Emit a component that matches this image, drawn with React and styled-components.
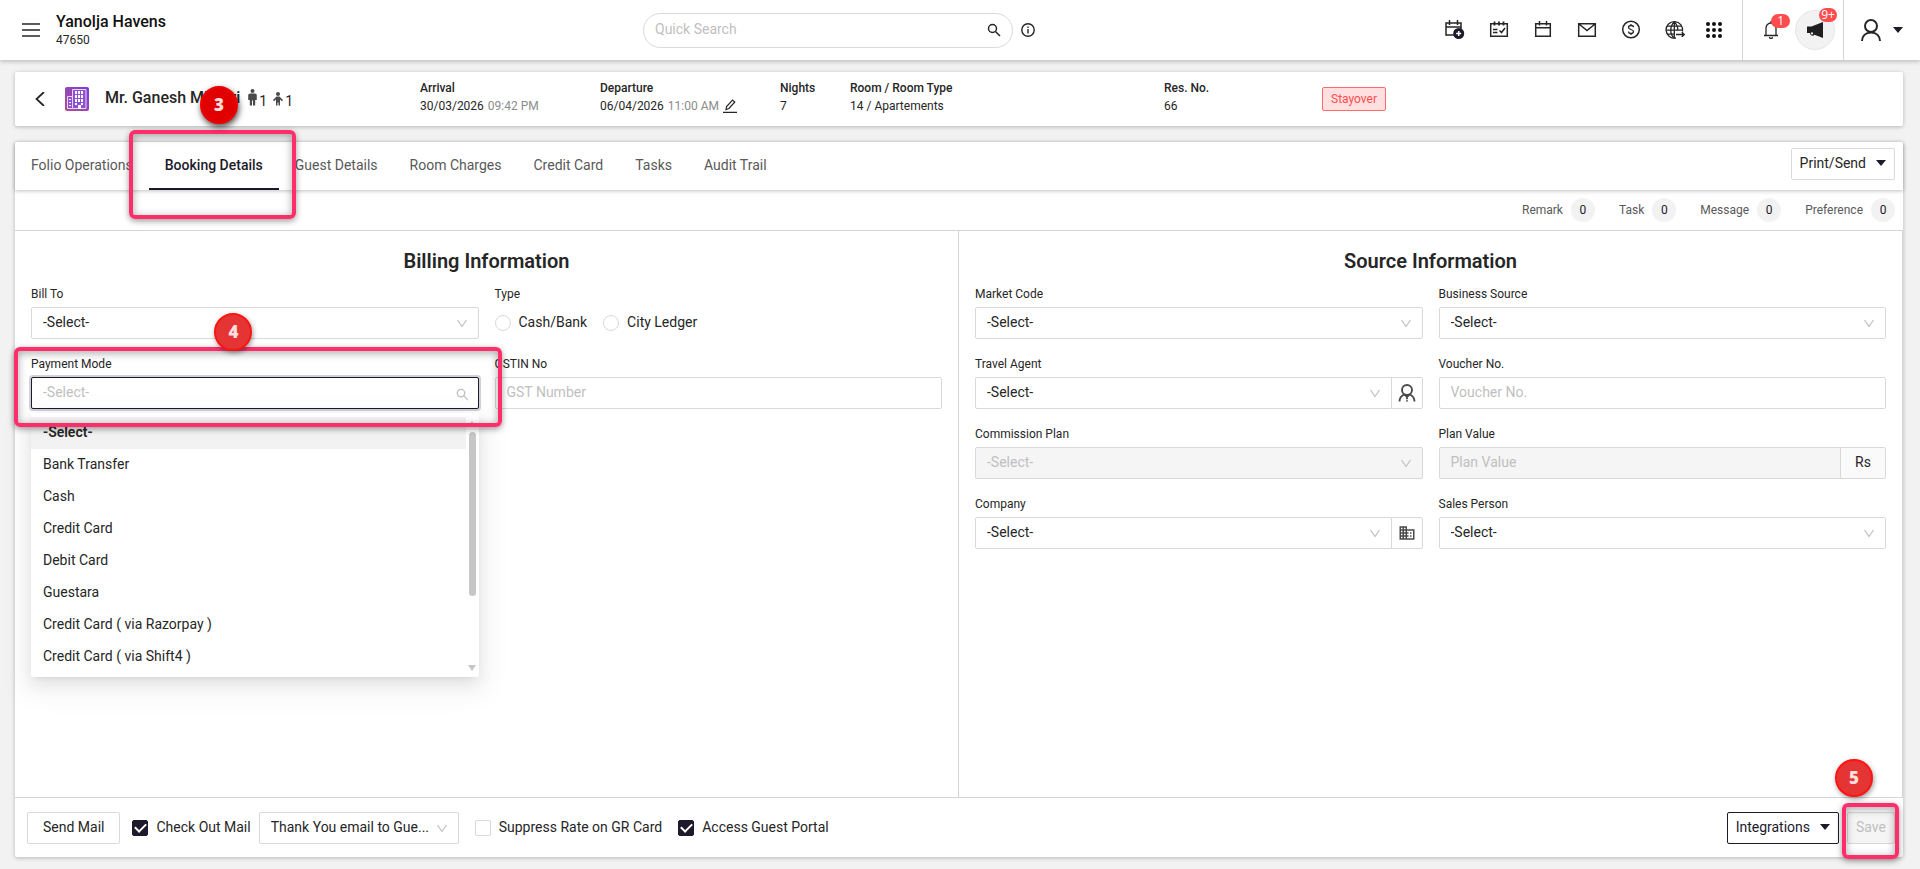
import styled, { createGlobalStyle, css } from 'styled-components';
import { MdBusiness } from 'react-icons/md';

const GlobalStyle = createGlobalStyle`
  * {
    box-sizing: border-box;
  }

  body {
    margin: 0;
    background: #f2f2f2;
    color: #262626;
    font-family: Roboto, "Liberation Sans", sans-serif;
    font-size: 14px;
    line-height: 20px;
  }

  button, input, select {
    font: inherit;
    color: inherit;
    margin: 0;
  }

  svg {
    display: block;
    flex: none;
  }
`;

const Page = styled.div`
  display: flex;
  flex-direction: column;
  min-height: 100vh;
`;

/* ---------- top header ---------- */

const Header = styled.header`
  display: flex;
  align-items: stretch;
  height: 60px;
  background: #fff;
  box-shadow: 0 2px 4px rgba(0, 0, 0, 0.2);
`;

const Brand = styled.div`
  display: flex;
  align-items: center;
  flex: 0 1 643px;
  padding-left: 22px;
  gap: 16px;

  & h1 {
    margin: 0;
    font-size: 16px;
    font-weight: 500;
    line-height: 20px;
    color: #111;
  }

  & p {
    margin: 0;
    font-size: 12px;
    line-height: 16px;
  }
`;

const IconButton = styled.button`
  position: relative;
  display: flex;
  align-items: center;
  justify-content: center;
  width: ${(props) => props.$width || 20}px;
  padding: 0;
  border: 0;
  background: none;
  cursor: pointer;
`;

const Search = styled.div`
  display: flex;
  align-items: center;
  gap: 8px;

  & .box {
    display: flex;
    align-items: center;
    width: 370px;
    height: 35px;
    padding: 0 11px;
    border: 1px solid #d9d9d9;
    border-radius: 18px;
  }

  & input {
    flex: 1;
    min-width: 0;
    padding: 0 0 2px;
    border: 0;
    outline: none;
    background: none;
  }

  & input::placeholder {
    color: #bfbfbf;
  }
`;

const Shortcuts = styled.nav`
  display: flex;
  margin-left: auto;
  padding-right: 11px;
`;

const HeaderGroup = styled.div`
  display: flex;
  align-items: center;
  gap: ${(props) => props.$gap}px;
  padding: ${(props) => props.$padding};
  border: 0;
  border-left: 1px solid #d4d5da;
  background: none;
`;

const Promo = styled.button`
  position: relative;
  display: flex;
  align-items: center;
  justify-content: center;
  width: 40px;
  height: 40px;
  padding: 0;
  border: 1px solid #e6e6e6;
  border-radius: 50%;
  background: #f2f2f2;
`;

const Badge = styled.span`
  position: absolute;
  top: ${(props) => props.$top}px;
  right: ${(props) => props.$right}px;
  min-width: 18px;
  height: 14px;
  padding: 0 ${(props) => props.$pad || 0}px;
  border-radius: 7px;
  background: #ff4d4f;
  color: #fff;
  font-family: "Open Sans", sans-serif;
  font-size: 12px;
  line-height: 13px;
  text-align: center;
`;

/* ---------- guest strip ---------- */

const Content = styled.main`
  display: flex;
  flex-direction: column;
  flex: 1;
  gap: 16px;
  padding: 12px 17px 12px 15px;
`;

const GuestBar = styled.section`
  display: grid;
  grid-template-columns: 405px 180px 180px 70px 314fr 158fr 581fr;
  align-items: center;
  height: 54px;
  border-radius: 2px;
  background: #fff;
  box-shadow: 0 1px 4px rgba(0, 0, 0, 0.25);
`;

const Guest = styled.div`
  position: relative;
  display: flex;
  align-items: center;
  padding-left: 20px;

  & .logo {
    margin: 0 16px 0 20px;
  }

  & h2 {
    margin: 0 8px 2px 0;
    font-size: 16px;
    font-weight: 500;
    line-height: 20px;
  }
`;

const Pax = styled.span`
  display: flex;
  align-items: flex-end;
  gap: 2px;
  height: 17px;
  margin: 0 6px 4px 0;
  line-height: 10px;
`;

const Fact = styled.dl`
  margin: 0 0 4px;
  font-size: 12px;
  line-height: 18px;

  & dt {
    font-weight: 500;
  }

  & dd {
    display: flex;
    align-items: center;
    gap: 4px;
    margin: 0;
  }

  & time {
    color: #8c8c8c;
  }
`;

const Status = styled.span`
  justify-self: start;
  padding: 0 8px;
  border: 1px solid #ff6b6d;
  border-radius: 2px;
  background: #ffdfdf;
  color: #ff4d4f;
  font-size: 12px;
  line-height: 22px;
`;

/* ---------- booking card ---------- */

const Card = styled.section`
  display: flex;
  flex-direction: column;
  flex: 1;
  border-radius: 2px;
  background: #fff;
  box-shadow: 0 1px 4px rgba(0, 0, 0, 0.25);
`;

const TabBar = styled.div`
  display: flex;
  align-items: stretch;
  height: 48px;
  padding-right: 8px;
  box-shadow: 0 1px 4px rgba(0, 0, 0, 0.25);
`;

const TabSlot = styled.div`
  position: relative;
  display: flex;
`;

const Tab = styled.button`
  padding: 0 16px;
  border: 0;
  border-bottom: 2px solid ${(props) => (props.$active ? '#1c1a2b' : 'transparent')};
  background: none;
  color: ${(props) => (props.$active ? '#1c1a2b' : '#595959')};
  font-weight: ${(props) => (props.$active ? 500 : 400)};
`;

const Button = styled.button`
  display: flex;
  align-items: center;
  gap: ${(props) => props.$gap || 0}px;
  height: 32px;
  padding: 0 ${(props) => props.$pad || 8}px 2px;
  border: 1px solid #d9d9d9;
  border-radius: 2px;
  background: #fff;
  white-space: nowrap;

  ${(props) =>
    props.$dark &&
    css`
      border-color: #1c1a2b;
      color: #1c1a2b;
    `}

  &:disabled {
    background: #f5f5f5;
    color: #bfbfbf;
  }
`;

const PrintSlot = styled.div`
  margin: 6px 0 0 auto;
`;

const Counters = styled.div`
  display: flex;
  align-items: center;
  justify-content: flex-end;
  gap: 24px;
  height: 41px;
  padding-right: 8px;
  border-bottom: 1px solid #d4d5da;
  color: #595959;
  font-size: 12px;

  & span {
    display: flex;
    align-items: center;
    gap: 8px;
  }

  & b {
    width: 24px;
    border-radius: 12px;
    background: #f2f2f2;
    color: #1c1a2b;
    font-weight: 400;
    line-height: 24px;
    text-align: center;
  }
`;

const Panels = styled.div`
  display: grid;
  grid-template-columns: 1fr 1fr;
  flex: 1;
`;

const Panel = styled.section`
  padding: 16px;
  border-right: 1px solid #d4d5da;

  & h3 {
    margin: 0 0 10px;
    font-size: 20px;
    font-weight: 600;
    line-height: 28px;
    text-align: center;
  }
`;

const FieldGrid = styled.div`
  display: grid;
  grid-template-columns: 1fr 1fr;
  gap: 16px;
`;

const FieldBox = styled.div`
  position: relative;
  min-width: 0;

  & > .label {
    display: block;
    margin-bottom: 4px;
    font-size: 12px;
    line-height: 18px;
  }
`;

const Row = styled.div`
  position: relative;
  display: flex;
`;

const controlStyle = css`
  width: 100%;
  height: 32px;
  padding: 0 11px 2px;
  border: 1px solid #d9d9d9;
  border-radius: 2px;
  outline: none;
  background: #fff;
  opacity: 1;

  &::placeholder {
    color: #bfbfbf;
  }

  &:disabled {
    background: #f5f5f5;
    color: #bfbfbf;
  }
`;

const TextInput = styled.input`
  ${controlStyle}

  ${(props) =>
    props.$focused &&
    css`
      border-color: #1c1a2b;
      box-shadow: 0 0 0 2px rgba(28, 26, 43, 0.2);
    `}
`;

const NativeSelect = styled.select`
  ${controlStyle}
  appearance: none;
`;

const SelectWrap = styled.div`
  position: relative;
  flex: ${(props) => (props.$width ? `0 0 ${props.$width}px` : '1')};
  min-width: 0;

  & > svg {
    position: absolute;
    top: 10px;
    right: 11px;
    pointer-events: none;
  }
`;

const Addon = styled.button`
  display: flex;
  align-items: center;
  justify-content: center;
  flex: 0 0 32px;
  height: 32px;
  margin-left: -1px;
  padding: 0;
  border: 1px solid #d9d9d9;
  border-radius: 0 2px 2px 0;
  background: #fff;
  color: #4a4a4a;
`;

const Unit = styled.span`
  flex: 0 0 46px;
  height: 32px;
  margin-left: -1px;
  border: 1px solid #d9d9d9;
  border-radius: 0 2px 2px 0;
  background: #fafafa;
  line-height: 28px;
  text-align: center;
`;

const Radios = styled.div`
  display: flex;
  gap: 16px;
  height: 32px;
`;

const Choice = styled.label`
  display: flex;
  align-items: center;
  gap: 8px;
  padding-bottom: 2px;
  white-space: nowrap;

  & input {
    display: grid;
    place-content: center;
    appearance: none;
    width: 16px;
    height: 16px;
    margin-top: 2px;
    border: 1px solid #d9d9d9;
    border-radius: ${(props) => (props.$round ? '50%' : '2px')};
    background: #fff;
  }

  & input:checked {
    border-color: #1c1a2b;
    background: #1c1a2b;
  }

  & input:checked::after {
    content: '';
    width: 5px;
    height: 9px;
    margin-bottom: 2px;
    border: solid #fff;
    border-width: 0 2px 2px 0;
    transform: rotate(45deg);
  }
`;

/* payment mode list */

const Dropdown = styled.div`
  position: absolute;
  top: calc(100% + 4px);
  left: 0;
  right: 0;
  z-index: 1;
  display: flex;
  padding: 4px 0;
  border-radius: 2px;
  background: #fff;
  box-shadow: 0 3px 6px -4px rgba(0, 0, 0, 0.12), 0 6px 16px rgba(0, 0, 0, 0.08),
    0 9px 28px 8px rgba(0, 0, 0, 0.05);

  & ul {
    flex: 1;
    margin: 0;
    padding: 0;
    list-style: none;
  }
`;

const Option = styled.li`
  height: 32px;
  padding: 0 12px;
  line-height: 30px;
  background: ${(props) => (props.$selected ? '#f2f2f2' : 'none')};
  font-weight: ${(props) => (props.$selected ? 600 : 400)};
`;

const Scrollbar = styled.div`
  display: flex;
  flex-direction: column;
  align-items: center;
  gap: 6px;
  width: 13px;
  padding: 4px 0 2px;

  & i {
    width: 7px;
    height: 164px;
    margin-bottom: auto;
    border-radius: 4px;
    background: #c6c6c6;
  }
`;

const Footer = styled.footer`
  display: flex;
  align-items: center;
  height: 60px;
  padding: 0 8px 0 12px;
  border-top: 1px solid #d4d5da;

  & .mail {
    display: flex;
    gap: 8px;
    margin: 0 16px 0 12px;
  }

  & .choices {
    display: flex;
    gap: 16px;
  }

  & .actions {
    position: relative;
    display: flex;
    gap: 8px;
    margin-left: auto;
  }
`;

/* ---------- step markers laid over the page ---------- */

const Highlight = styled.div`
  position: absolute;
  inset: ${(props) => props.$inset};
  z-index: 3;
  border: 4px solid #ff2e6a;
  border-radius: 6px;
  box-shadow: 0 2px 6px rgba(0, 0, 0, 0.4), inset 0 2px 8px rgba(0, 0, 0, 0.35);
  pointer-events: none;
`;

const Step = styled.span`
  position: absolute;
  top: ${(props) => props.$top}px;
  left: ${(props) => props.$left};
  z-index: 4;
  width: 38px;
  height: 38px;
  border: 2px solid ${(props) => (props.$strong ? '#f00000' : '#ff1414')};
  border-radius: 50%;
  background: ${(props) => (props.$strong ? '#e10000' : '#e53434')};
  box-shadow: ${(props) =>
    props.$strong ? '1px 3px 6px rgba(0, 0, 0, 0.7)' : '1px 2px 5px rgba(0, 0, 0, 0.4)'};
  color: #ffdede;
  font-family: "Open Sans", sans-serif;
  font-size: 17px;
  font-weight: 800;
  line-height: 33px;
  text-align: center;
`;

/* ---------- icons ---------- */

const Svg = ({ w = 20, h = w, children, ...rest }) => (
  <svg
    width={w}
    height={h}
    viewBox={`0 0 ${w} ${h}`}
    fill='none'
    stroke='#262626'
    strokeWidth='1.5'
    aria-hidden='true'
    {...rest}
  >
    {children}
  </svg>
);

const Caret = () => (
  <Svg w={10} h={6} stroke='none' fill='#1c1a2b'>
    <path d='M0 0h10L5 6z' />
  </Svg>
);

const Chevron = () => (
  <Svg w={12} stroke='#bfbfbf' strokeWidth='1.2'>
    <path d='M1.5 3L6 9.5 10.5 3' />
  </Svg>
);

const Magnifier = (props) => (
  <Svg w={14} {...props}>
    <circle cx='5.5' cy='5.5' r='4' />
    <path d='M8.5 8.5L13 13' />
  </Svg>
);

const CalendarPlus = () => (
  <Svg>
    <path d='M9 15H1V3h15v7M1 7h15M4.5 0v5M12.5 0v5' />
    <circle cx='13.7' cy='13.5' r='5.5' fill='#1c1a2b' stroke='none' />
    <path d='M13.7 11v5M11.2 13.5h5' stroke='#fff' />
  </Svg>
);

const CalendarCheck = () => (
  <Svg>
    <path d='M1.7 3.7h16.6v12.6H1.7z' />
    <path d='M5.5 1.5v4M10 1.5v4M14.5 1.5v4' strokeWidth='1.8' />
    <path d='M4 9.5h4.5M4 12.5h4.5M10.5 10.5l2 2 3.5-4.5' />
  </Svg>
);

const Calendar = () => (
  <Svg>
    <path d='M2.7 3.7h14.6v12.6H2.7zM2.7 7.7h14.6M6.5 1v4.5M13.5 1v4.5' />
  </Svg>
);

const Mail = () => (
  <Svg>
    <path d='M1.7 3.7h16.6v12.6H1.7zM2 4l8 6.5L18 4' />
  </Svg>
);

const Dollar = () => (
  <Svg>
    <circle cx='10' cy='9.5' r='8.3' />
    <path d='M12.5 7.3c0-1.2-1-1.8-2.5-1.8s-2.5.7-2.5 1.9c0 2.7 5 1.5 5 4.2 0 1.2-1 1.9-2.5 1.9s-2.5-.7-2.5-1.9M10 4v1.5M10 13.5V15' strokeWidth='1.3' />
  </Svg>
);

const Globe = () => (
  <Svg strokeWidth='1.3'>
    <path d='M17.5 11.5A8.3 8.3 0 1 0 11 18' />
    <path d='M9.3 18.2c-2.5-2-3.5-5-3.5-8s1-6 3.5-8.2c2.5 2.2 3.5 5.2 3.5 8.2M9.3 2v16M1 10.2h16.5M2 6.2h14.5M2 14.2h8' />
    <path d='M11 14.5h8M16.8 12.3L19 14.5l-2.2 2.2' strokeWidth='1.6' />
  </Svg>
);

const Apps = () => (
  <Svg w={18} stroke='none' fill='#111'>
    {[3, 9, 15].map((y) => [3, 9, 15].map((x) => <circle key={`${x}-${y}`} cx={x} cy={y} r='2' />))}
  </Svg>
);

const Bell = () => (
  <Svg w={14} h={18} strokeWidth='1.3'>
    <path d='M0 14.5h14M2 14.5V7a5 5 0 0 1 10 0v7.5M7 0v2M5.5 16a1.5 1.5 0 0 0 3 0' />
  </Svg>
);

const Megaphone = () => (
  <Svg w={18} h={16} stroke='none' fill='#1f1f1f'>
    <path d='M1 4.5h4.5L17 0v16L8.5 12.7A2.5 2.5 0 0 1 4 11H1z' />
    <circle cx='6' cy='11.4' r='1.1' fill='#f2f2f2' />
  </Svg>
);

const User = () => (
  <Svg w={20} h={22} strokeWidth='2'>
    <circle cx='10' cy='7' r='6' />
    <path d='M1 22c0-5 3.5-8.5 9-8.5s9 3.5 9 8.5' />
  </Svg>
);

const Agent = () => (
  <Svg w={18} stroke='#4a4a4a' strokeWidth='1.9'>
    <circle cx='9' cy='6' r='5' />
    <path d='M1.5 17.5c0-3 1.5-5.5 4.5-7M16.5 17.500c0-3-1.5-5.5-4.5-7M6.5 10.5L9 13l2.5-2.500' />
    <path d='M9 13.5v4' strokeDasharray='1.8 1' />
  </Svg>
);

const HotelLogo = () => (
  <Svg w={24} className='logo' stroke='none'>
    <defs>
      <linearGradient id='hotel' x1='1' y1='0' x2='0' y2='1'>
        <stop offset='0' stopColor='#7a3be0' />
        <stop offset='1' stopColor='#b0508c' />
      </linearGradient>
    </defs>
    <rect width='24' height='24' rx='2' fill='url(#hotel)' />
    <g stroke='#e9d5f7' strokeWidth='1'>
      <path d='M7.500 21.500v-19h13.500v19zM7.500 9.500h-5v12h5' fill='#8f50d4' />
    </g>
    <g fill='#fff'>
      {[4, 8, 12].map((y) =>
        [10, 13, 16].map((x) => <rect key={`${x}-${y}`} x={x} y={y} width='2' height='3' />)
      )}
      <path d='M10 16h2v2h-2zM16 16h2v2h-2zM13 18h3v4h-3zM4 12h2v1H4zM4 15h2v1H4zM4 18h2v1H4z' />
    </g>
  </Svg>
);

const Adult = () => (
  <Svg w={9} h={17} stroke='none' fill='#4a4a4a'>
    <circle cx='4.5' cy='2' r='2' />
    <path d='M2 4.5h5a1.8 1.8 0 0 1 1.8 1.8V11H7.2v5.5H5V11.5H4v5H1.8V11H.2V6.3A1.8 1.8 0 0 1 2 4.5z' />
  </Svg>
);

const Child = () => (
  <Svg w={10} h={14} stroke='none' fill='#4a4a4a'>
    <circle cx='5' cy='2' r='2' />
    <path d='M3.5 4.5h3L10 8l-1 1.2-2-1.7V13.5H5.5V10.5h-1v3H3V7.5L1 9.2 0 8z' />
  </Svg>
);

/* ---------- parts ---------- */

const SelectBox = ({ id, value = '-Select-', disabled, width, ...rest }) => (
  <SelectWrap $width={width}>
    <NativeSelect id={id} disabled={disabled} {...rest}>
      <option>{value}</option>
    </NativeSelect>
    <Chevron />
  </SelectWrap>
);

const Field = ({ label, id, children }) => (
  <FieldBox>
    <label className='label' htmlFor={id}>{label}</label>
    <Row>{children}</Row>
  </FieldBox>
);

const shortcuts = [
  { name: 'New booking', icon: CalendarPlus },
  { name: 'Stay view', icon: CalendarCheck },
  { name: 'Calendar', icon: Calendar },
  { name: 'Mail', icon: Mail },
  { name: 'Cashiering', icon: Dollar },
  { name: 'Web booking', icon: Globe },
  { name: 'Apps', icon: Apps, width: 34 },
];

const tabs = [
  'Folio Operations',
  'Booking Details',
  'Guest Details',
  'Room Charges',
  'Credit Card',
  'Tasks',
  'Audit Trail',
];

const paymentModes = [
  '-Select-',
  'Bank Transfer',
  'Cash',
  'Credit Card',
  'Debit Card',
  'Guestara',
  'Credit Card ( via Razorpay )',
  'Credit Card ( via Shift4 )',
];

const TopHeader = () => (
  <Header>
    <Brand>
      <IconButton $width={18} aria-label='Menu'>
        <Svg w={18} h={14}>
          <path d='M0 1h18M0 7h18M0 13h18' />
        </Svg>
      </IconButton>
      <div>
        <h1>Yanolja Havens</h1>
        <p>47650</p>
      </div>
    </Brand>
    <Search>
      <div className='box'>
        <input type='text' placeholder='Quick Search' aria-label='Quick Search' />
        <Magnifier />
      </div>
      <Svg w={14} strokeWidth='1.4'>
        <circle cx='7' cy='7' r='6.2' />
        <path d='M7 6v4.5M7 3.5V5' />
      </Svg>
    </Search>
    <Shortcuts>
      {shortcuts.map(({ name, icon: Icon, width }) => (
        <IconButton key={name} $width={width || 44} aria-label={name}>
          <Icon />
        </IconButton>
      ))}
    </Shortcuts>
    <HeaderGroup $gap={17} $padding='0 8px 0 21px'>
      <IconButton $width={14} aria-label='Notifications'>
        <Bell />
        <Badge $top={-7} $right={-12} $pad={6}>1</Badge>
      </IconButton>
      <Promo aria-label='Announcements'>
        <Megaphone />
        <Badge $top={-3} $right={-3}>9+</Badge>
      </Promo>
    </HeaderGroup>
    <HeaderGroup as='button' $gap={12} $padding='0 17px' aria-label='Account'>
      <User />
      <Caret />
    </HeaderGroup>
  </Header>
);

const GuestStrip = () => (
  <GuestBar>
    <Guest>
      <IconButton $width={10} aria-label='Back'>
        <Svg w={10} h={14} strokeWidth='1.8'>
          <path d='M9 0L1.5 7 9 14' />
        </Svg>
      </IconButton>
      <HotelLogo />
      <h2>Mr. Ganesh Mishtri</h2>
      <Pax><Adult />1</Pax>
      <Pax><Child />1</Pax>
      <Step $top={-1} $left='185px' $strong>3</Step>
    </Guest>
    <Fact>
      <dt>Arrival</dt>
      <dd>30/03/2026 <time>09:42 PM</time></dd>
    </Fact>
    <Fact>
      <dt>Departure</dt>
      <dd>
        06/04/2026 <time>11:00 AM</time>
        <Svg w={14} strokeWidth='1.2'>
          <path d='M3 10.5l.6-3L9.5 1l2.3 2L6 9.5zM0 13.3h14' />
        </Svg>
      </dd>
    </Fact>
    <Fact>
      <dt>Nights</dt>
      <dd>7</dd>
    </Fact>
    <Fact>
      <dt>Room / Room Type</dt>
      <dd>14 / Apartements</dd>
    </Fact>
    <Fact>
      <dt>Res. No.</dt>
      <dd>66</dd>
    </Fact>
    <Status>Stayover</Status>
  </GuestBar>
);

const BillingPanel = () => (
  <Panel>
    <h3>Billing Information</h3>
    <FieldGrid>
      <Field label='Bill To' id='bill-to'>
        <SelectBox id='bill-to' />
      </Field>
      <FieldBox role='radiogroup' aria-labelledby='type-label'>
        <span className='label' id='type-label'>Type</span>
        <Radios>
          <Choice $round><input type='radio' name='type' />Cash/Bank</Choice>
          <Choice $round><input type='radio' name='type' />City Ledger</Choice>
        </Radios>
      </FieldBox>
      <FieldBox>
        <label className='label' htmlFor='payment-mode'>Payment Mode</label>
        <SelectWrap>
          <TextInput id='payment-mode' role='combobox' aria-expanded='true' placeholder='-Select-' $focused />
          <Magnifier w={14} viewBox='-2 -1 15 15' stroke='#bfbfbf' strokeWidth='1.4' />
        </SelectWrap>
        <Dropdown>
          <ul role='listbox'>
            {paymentModes.map((mode, i) => (
              <Option key={mode} role='option' aria-selected={i === 0} $selected={i === 0}>{mode}</Option>
            ))}
          </ul>
          <Scrollbar>
            <Svg w={8} h={5} stroke='none' fill='#c6c6c6'><path d='M4 0l4 5H0z' /></Svg>
            <i />
            <Svg w={8} h={6} stroke='none' fill='#c6c6c6'><path d='M0 0h8L4 6z' /></Svg>
          </Scrollbar>
        </Dropdown>
        <Highlight $inset='-8px -23px -18px -17px' />
        <Step $top={-42} $left='41%'>4</Step>
      </FieldBox>
      <Field label='GSTIN No' id='gstin'>
        <TextInput id='gstin' placeholder='GST Number' />
      </Field>
    </FieldGrid>
  </Panel>
);

const SourcePanel = () => (
  <Panel>
    <h3>Source Information</h3>
    <FieldGrid>
      <Field label='Market Code' id='market'>
        <SelectBox id='market' />
      </Field>
      <Field label='Business Source' id='source'>
        <SelectBox id='source' />
      </Field>
      <Field label='Travel Agent' id='agent'>
        <SelectBox id='agent' />
        <Addon aria-label='Add travel agent'><Agent /></Addon>
      </Field>
      <Field label='Voucher No.' id='voucher'>
        <TextInput id='voucher' placeholder='Voucher No.' />
      </Field>
      <Field label='Commission Plan' id='plan'>
        <SelectBox id='plan' disabled />
      </Field>
      <Field label='Plan Value' id='plan-value'>
        <TextInput id='plan-value' placeholder='Plan Value' disabled />
        <Unit>Rs</Unit>
      </Field>
      <Field label='Company' id='company'>
        <SelectBox id='company' />
        <Addon aria-label='Add company'><MdBusiness size={18} /></Addon>
      </Field>
      <Field label='Sales Person' id='sales'>
        <SelectBox id='sales' />
      </Field>
    </FieldGrid>
  </Panel>
);

const App = () => {
  return (
    <Page>
      <GlobalStyle />
      <TopHeader />
      <Content>
        <GuestStrip />
        <Card>
          <TabBar>
            {tabs.map((tab, i) => (
              <TabSlot key={tab}>
                <Tab $active={i === 1}>{tab}</Tab>
                {i === 1 && <Highlight $inset='-12px -17px -29px -20px' />}
              </TabSlot>
            ))}
            <PrintSlot>
              <Button $gap={10}>Print/Send <Caret /></Button>
            </PrintSlot>
          </TabBar>
          <Counters>
            {['Remark', 'Task', 'Message', 'Preference'].map((name) => (
              <span key={name}>{name} <b>0</b></span>
            ))}
          </Counters>
          <Panels>
            <BillingPanel />
            <SourcePanel />
          </Panels>
          <Footer>
            <Button $pad={15}>Send Mail</Button>
            <div className='mail'>
              <Choice><input type='checkbox' defaultChecked />Check Out Mail</Choice>
              <SelectBox width={200} value='Thank You email to Gue...' aria-label='Mail template' />
            </div>
            <div className='choices'>
              <Choice><input type='checkbox' />Suppress Rate on GR Card</Choice>
              <Choice><input type='checkbox' defaultChecked />Access Guest Portal</Choice>
            </div>
            <div className='actions'>
              <Button $gap={10} $dark>Integrations <Caret /></Button>
              <TabSlot>
                <Button disabled>Save</Button>
                <Highlight $inset='-9px -4px -15px -5px' />
                <Step $top={-53} $left='-12px'>5</Step>
              </TabSlot>
            </div>
          </Footer>
        </Card>
      </Content>
    </Page>
  );
};

export default App;
